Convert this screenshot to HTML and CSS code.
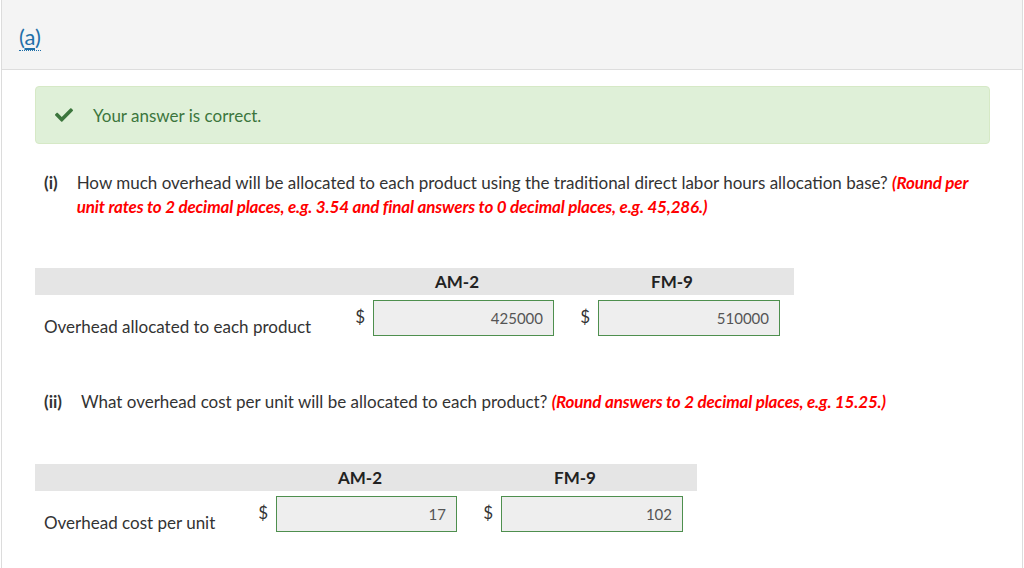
FILE: index.html
```html
<!DOCTYPE html>
<html>
<head>
<meta charset="utf-8">
<link rel="stylesheet" href="styles.css">
</head>
<body>
<div class="page">
  <div class="part-header"><span class="part-link">(<u>a</u>)</span></div>
  <div class="content">
    <div class="alert">
      <svg class="check" viewBox="0 0 512 512" width="18" height="18"><path fill="#3c763d" d="M173.9 439.4l-166.4-166.4c-10-10-10-26.2 0-36.2l36.2-36.2c10-10 26.2-10 36.2 0L192 312.7 432.1 72.6c10-10 26.2-10 36.2 0l36.2 36.2c10 10 10 26.2 0 36.2l-294.4 294.4c-10 10-26.2 10-36.2 0z"/></svg>
      <span>Your answer is correct.</span>
    </div>

    <div class="question q1">
      <span class="marker">(i)</span>
      <p class="qtext">How much overhead will be allocated to each product using the traditional direct labor hours allocation base? <em class="hint">(Round per unit rates to 2 decimal places, e.g. 3.54 and final answers to 0 decimal places, e.g. 45,286.)</em></p>
    </div>

    <div class="answer-table t1">
      <div class="thead">
        <div></div><div class="th">AM-2</div><div class="th">FM-9</div><div></div>
      </div>
      <div class="trow">
        <div class="label">Overhead allocated to each product</div>
        <div class="cell c2"><span class="cur">$</span><div class="input">425000</div></div>
        <div class="cell c3"><span class="cur">$</span><div class="input">510000</div></div>
        <div></div>
      </div>
    </div>

    <div class="question q2">
      <span class="marker">(ii)</span>
      <p class="qtext">What overhead cost per unit will be allocated to each product? <em class="hint">(Round answers to 2 decimal places, e.g. 15.25.)</em></p>
    </div>

    <div class="answer-table t2">
      <div class="thead">
        <div></div><div class="th">AM-2</div><div class="th">FM-9</div><div></div>
      </div>
      <div class="trow">
        <div class="label">Overhead cost per unit</div>
        <div class="cell c2"><span class="cur">$</span><div class="input">17</div></div>
        <div class="cell c3"><span class="cur">$</span><div class="input">102</div></div>
        <div></div>
      </div>
    </div>
  </div>
</div>
</body>
</html>
```

FILE: styles.css
```css
html, body {
  margin: 0;
  padding: 0;
  background: #fff;
}
body {
  font-family: Lato, "Open Sans", sans-serif;
  font-size: 17px;
  color: #333;
}
.page {
  margin: 0 1px;
  border-left: 1px solid #dcdcdc;
  border-right: 1px solid #dcdcdc;
  min-height: 568px;
}
.part-header {
  height: 70px;
  background: #f4f4f4;
  border-bottom: 1px solid #dddddd;
  padding-left: 17px;
  box-sizing: border-box;
  padding-top: 24px;
  line-height: 26px;
}
.part-link {
  color: #1f6fa8;
  font-size: 22px;
  border-bottom: 1px dotted #1f6fa8;
}
.part-link u {
  text-decoration: underline;
  text-underline-offset: 3px;
}
.content {
  padding: 16px 32px 0 33px;
}
.alert {
  height: 58px;
  box-sizing: border-box;
  background: #dff0d8;
  border: 1px solid #d6e9c6;
  border-radius: 4px;
  display: flex;
  align-items: center;
  padding-left: 19px;
  color: #3c763d;
  gap: 20px;
}
.check {
  display: block;
}
.question {
  display: flex;
  line-height: 24px;
}
.q1 { margin-top: 27px; }
.q2 { margin-top: 42px; }
.marker {
  font-weight: bold;
  margin-left: 9px;
  margin-right: 19px;
  white-space: nowrap;
}
.qtext {
  margin: 0;
}
.hint {
  color: #ff0000;
  font-weight: bold;
  letter-spacing: -0.15px;
}
.answer-table {
  margin-top: 49px;
}
.t2 { margin-top: 50px; }
.thead, .trow {
  display: grid;
}
.t1 .thead, .t1 .trow { grid-template-columns: 315px 214px 216px 14px; }
.t2 .thead, .t2 .trow { grid-template-columns: 218px 214px 216px 14px; }
.thead {
  background: #e5e5e5;
  height: 27px;
  line-height: 27px;
  width: fit-content;
}
.th {
  text-align: center;
  font-weight: bold;
  color: #222;
}
.trow {
  height: 53px;
}
.label {
  padding: 20px 0 0 9px;
  line-height: 24px;
}
.cell {
  display: flex;
  justify-content: flex-end;
  align-items: flex-start;
  padding-top: 5px;
  gap: 8px;
}
.c2 { padding-right: 10px; }
.cur {
  line-height: 24px;
  margin-top: 5px;
}
.input {
  width: 181px;
  height: 36px;
  box-sizing: border-box;
  background: #eeeeee;
  border: 1px solid #4e8f4e;
  text-align: right;
  padding-right: 10px;
  line-height: 34px;
  font-size: 15px;
  color: #555;
}
.c3 .input { width: 182px; }
```
